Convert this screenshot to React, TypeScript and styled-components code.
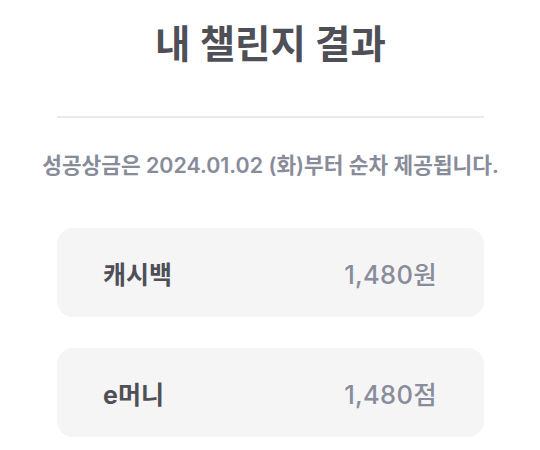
import React from "react";
import styled, { createGlobalStyle } from "styled-components";

const Global = createGlobalStyle`
  html, body { margin: 0; padding: 0; background: #ffffff; }
  body { font-family: Inter, "Noto Sans CJK KR", "Noto Sans", sans-serif; }
`;

const Page = styled.div`
  width: 540px;
  height: 450px;
  display: flex;
  flex-direction: column;
  align-items: center;
  box-sizing: border-box;
  padding: 18px 56px 0 57px;
`;

const Title = styled.h1`
  margin: 0;
  font-size: 38.5px;
  line-height: 52px;
  font-weight: 700;
  color: #4e4f57;
`;

const Divider = styled.hr`
  width: 100%;
  margin: 46px 0 0;
  border: none;
  height: 2px;
  background: #e9eaee;
`;

const Notice = styled.p`
  margin: 32px 0 0;
  font-size: 21.4px;
  line-height: 30px;
  font-weight: 600;
  color: #888b99;
  white-space: nowrap;
`;

const List = styled.div`
  width: 100%;
  display: flex;
  flex-direction: column;
  gap: 31px;
  margin-top: 48px;
`;

const Card = styled.div`
  height: 89px;
  border-radius: 16px;
  background: #f5f5f6;
  display: flex;
  align-items: center;
  justify-content: space-between;
  padding: 0 47px 0 46px;
`;

const Label = styled.span`
  font-size: 25px;
  font-weight: 700;
  color: #4e4f57;
`;

const Value = styled.span`
  font-size: 25.5px;
  font-weight: 500;
  color: #898c9a;
  letter-spacing: 0.3px;
`;

const rewards = [
  { label: "캐시백", value: "1,480원" },
  { label: "e머니", value: "1,480점" },
];

export default function App() {
  return (
    <>
      <Global />
      <Page>
        <Title>내 챌린지 결과</Title>
        <Divider />
        <Notice>성공상금은 2024.01.02 (화)부터 순차 제공됩니다.</Notice>
        <List>
          {rewards.map((r) => (
            <Card key={r.label}>
              <Label>{r.label}</Label>
              <Value>{r.value}</Value>
            </Card>
          ))}
        </List>
      </Page>
    </>
  );
}
